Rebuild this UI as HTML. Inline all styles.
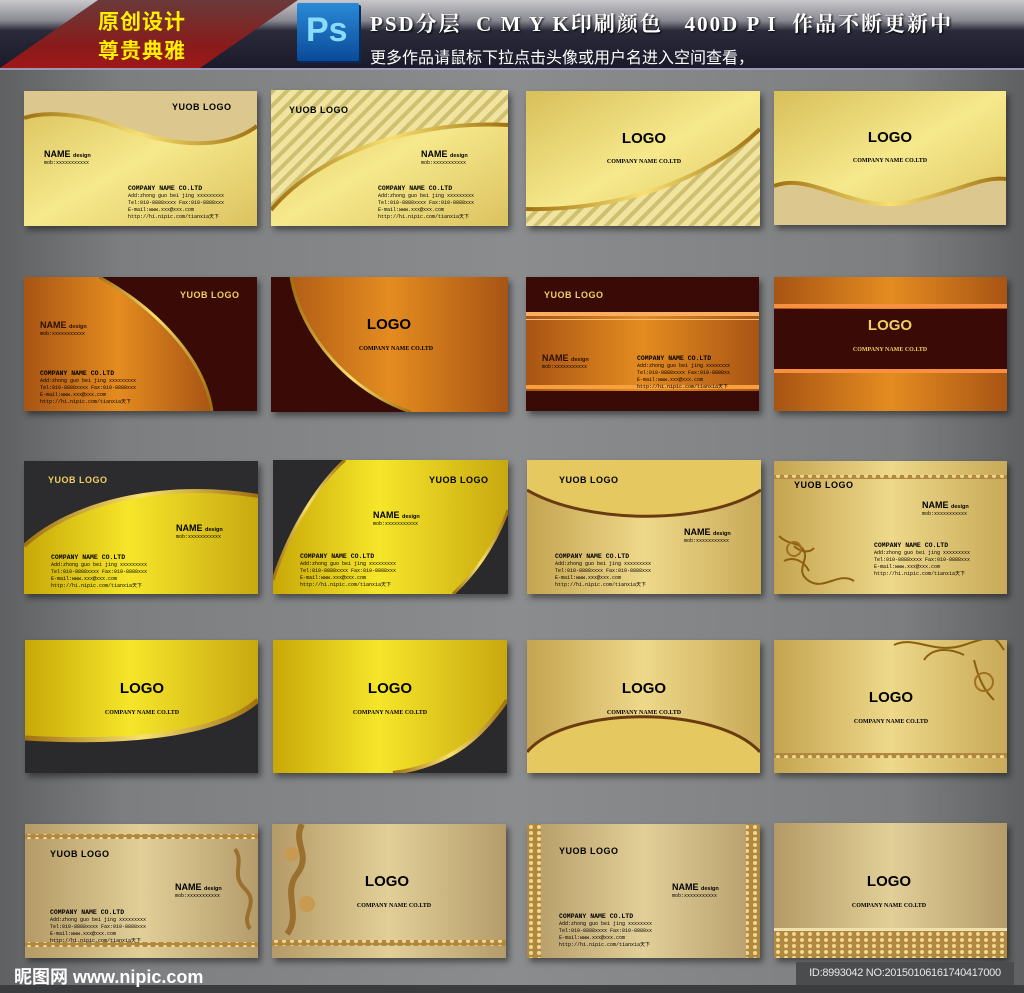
<!DOCTYPE html>
<html><head><meta charset="utf-8"><style>
*{margin:0;padding:0}
body{width:1024px;height:993px;overflow:hidden;position:relative;background:linear-gradient(90deg,#5e6062 0%,#7c7e80 12%,#8a8c8e 50%,#7c7e80 88%,#5e6062 100%);font-family:"Liberation Sans","Noto Sans CJK SC",sans-serif}
#hdr{position:absolute;left:0;top:0;width:1024px;height:68px;background:linear-gradient(180deg,#c8c8cc 0%,#8a8a92 30%,#2a2a3a 45%,#1a1a2a 100%);border-bottom:2px solid #9a9ab8}
#ban{position:absolute;left:0;top:0;width:298px;height:68px;background:linear-gradient(180deg,#6a3a3a,#8a1a1a 70%,#a01818);clip-path:polygon(98px 0,298px 0,200px 68px,0 68px)}
.bt{position:absolute;color:#fff000;font-size:21px;font-weight:bold;font-family:"Noto Sans CJK SC",sans-serif;letter-spacing:1px}
#ps{position:absolute;left:297px;top:3px;width:62px;height:58px;background:linear-gradient(180deg,#2a8ad8,#0a4a98);border-radius:2px;box-shadow:2px 2px 0 #062a5a}
#ps span{position:absolute;left:9px;top:8px;font:bold 34px "Liberation Sans",sans-serif;color:#8adcff}
.h1{position:absolute;left:370px;top:8px;color:#fff;font:bold 21px "Liberation Serif","Noto Serif CJK SC",serif;letter-spacing:2px;white-space:nowrap;text-shadow:1px 1px 2px #000}
.h2{position:absolute;left:370px;top:44px;color:#fff;font:16px "Noto Sans CJK SC",sans-serif;white-space:nowrap}
.card{position:absolute;box-shadow:3px 4px 6px rgba(0,0,0,.45)}
.card svg{display:block}
text{font-family:"Liberation Mono","Noto Sans CJK SC",monospace}
.yl{font:bold 9px "Liberation Sans",sans-serif;letter-spacing:.5px}
.lg{font:bold 15px "Liberation Sans",sans-serif;text-anchor:middle}
.cn{font:bold 6px "Liberation Serif",serif;text-anchor:middle}
.nm{font:bold 9px "Liberation Sans",sans-serif}
.ds{font:bold 5.5px "Liberation Sans",sans-serif}
.cb{font:bold 6.5px "Liberation Mono",monospace}
.cs{font:5px "Liberation Mono","Noto Sans CJK SC",monospace}
#foot{position:absolute;left:0;top:985px;width:1024px;height:8px;background:#3a3c3e}
#logo{position:absolute;left:14px;top:963px;color:#fff;font:bold 18px "Liberation Sans","Noto Sans CJK SC",sans-serif}
#id{position:absolute;left:796px;top:962px;width:218px;height:23px;background:#4a4c4e;color:#e8e8e8;font:11px "Liberation Sans",sans-serif;line-height:23px;text-align:center;white-space:nowrap;letter-spacing:-.3px}
</style></head><body>
<svg width="0" height="0" style="position:absolute"><defs>
<linearGradient id="gY" x1="0" y1="0" x2="1" y2="1"><stop offset="0" stop-color="#d8bf5a"/><stop offset=".5" stop-color="#f6e98c"/><stop offset="1" stop-color="#dcc260"/></linearGradient>
<linearGradient id="gB" x1="0" y1="0" x2="1" y2="0"><stop offset="0" stop-color="#c8a808"/><stop offset=".45" stop-color="#f6e62a"/><stop offset="1" stop-color="#c8a810"/></linearGradient>
<linearGradient id="gT" x1="0" y1="0" x2="1" y2="0"><stop offset="0" stop-color="#b49a66"/><stop offset=".5" stop-color="#e2cf98"/><stop offset="1" stop-color="#b49c6a"/></linearGradient>
<linearGradient id="gG" x1="0" y1="0" x2="1" y2="0"><stop offset="0" stop-color="#c4a450"/><stop offset=".5" stop-color="#eed88a"/><stop offset="1" stop-color="#c8aa58"/></linearGradient>
<linearGradient id="gO" x1="0" y1="0" x2="1" y2="0"><stop offset="0" stop-color="#a85414"/><stop offset=".5" stop-color="#e48c20"/><stop offset="1" stop-color="#a85414"/></linearGradient>
<linearGradient id="gS" x1="0" y1="0" x2="1" y2="0"><stop offset="0" stop-color="#a07010"/><stop offset=".5" stop-color="#f8e070"/><stop offset="1" stop-color="#a07010"/></linearGradient>
<pattern id="st" width="10" height="10" patternUnits="userSpaceOnUse" patternTransform="rotate(45)"><rect width="10" height="10" fill="#f0e4a0"/><rect width="4" height="10" fill="#cfc070"/></pattern>
<pattern id="ch" width="8" height="6" patternUnits="userSpaceOnUse"><rect width="8" height="6" fill="#b08840"/><circle cx="4" cy="3" r="2" fill="#f0d890"/></pattern>
</defs></svg>

<div id="hdr"></div>
<div id="ban"></div>
<div class="bt" style="left:98px;top:6px">原创设计</div>
<div class="bt" style="left:98px;top:35px">尊贵典雅</div>
<div id="ps"><span>Ps</span></div>
<div class="h1">PSD分层&nbsp;&nbsp;C M Y K印刷颜色&nbsp;&nbsp;&nbsp;400D P I&nbsp;&nbsp;作品不断更新中</div>
<div class="h2">更多作品请鼠标下拉点击头像或用户名进入空间查看，</div>

<!-- ROW 1 -->
<div class="card" style="left:24px;top:91px"><svg width="233" height="135">
<rect width="233" height="135" fill="url(#gY)"/>
<path d="M0 0H233V35C200 60 150 55 100 38 60 22 20 20 0 27Z" fill="#dcc88e"/>
<path d="M0 27C20 20 60 22 100 38 150 55 200 60 233 35" fill="none" stroke="url(#gS)" stroke-width="4"/>
<text x="148" y="19" class="yl">YUOB LOGO</text>
<text x="20" y="66" class="nm">NAME <tspan class="ds">design</tspan></text><text x="20" y="73" class="cs">mob:xxxxxxxxxxx</text>
<text x="104" y="99" class="cb">COMPANY NAME CO.LTD</text><text x="104" y="106" class="cs">Add:zhong guo bei jing xxxxxxxxx</text><text x="104" y="113" class="cs">Tel:010-8888xxxx Fax:010-8888xxx</text><text x="104" y="120" class="cs">E-mail:www.xxx@xxx.com</text><text x="104" y="127" class="cs">http://hi.nipic.com/tianxia天下</text>
</svg></div>
<div class="card" style="left:271px;top:90px"><svg width="237" height="136">
<rect width="237" height="136" fill="url(#gY)"/>
<path d="M0 0H237V35C150 30 50 60 0 120Z" fill="url(#st)"/>
<path d="M0 120C50 60 150 30 237 35" fill="none" stroke="url(#gS)" stroke-width="4"/>
<text x="18" y="23" class="yl">YUOB LOGO</text>
<text x="150" y="67" class="nm">NAME <tspan class="ds">design</tspan></text><text x="150" y="74" class="cs">mob:xxxxxxxxxxx</text>
<text x="107" y="100" class="cb">COMPANY NAME CO.LTD</text><text x="107" y="107" class="cs">Add:zhong guo bei jing xxxxxxxxx</text><text x="107" y="114" class="cs">Tel:010-8888xxxx Fax:010-8888xxx</text><text x="107" y="121" class="cs">E-mail:www.xxx@xxx.com</text><text x="107" y="128" class="cs">http://hi.nipic.com/tianxia天下</text>
</svg></div>
<div class="card" style="left:526px;top:91px"><svg width="234" height="135">
<rect width="234" height="135" fill="url(#gY)"/>
<path d="M0 135V118C90 120 180 90 234 38V135Z" fill="url(#st)"/>
<path d="M0 118C90 120 180 90 234 38" fill="none" stroke="url(#gS)" stroke-width="4"/>
<text x="118" y="52" class="lg">LOGO</text><text x="118" y="72" class="cn">COMPANY NAME CO.LTD</text>
</svg></div>
<div class="card" style="left:774px;top:91px"><svg width="232" height="134">
<rect width="232" height="134" fill="url(#gY)"/>
<path d="M0 95C40 80 80 125 140 110 190 98 210 85 232 88V134H0Z" fill="#dcc88e"/>
<path d="M0 95C40 80 80 125 140 110 190 98 210 85 232 88" fill="none" stroke="url(#gS)" stroke-width="4"/>
<text x="116" y="51" class="lg">LOGO</text><text x="116" y="71" class="cn">COMPANY NAME CO.LTD</text>
</svg></div>

<!-- ROW 2 -->
<div class="card" style="left:24px;top:277px"><svg width="233" height="134">
<rect width="233" height="134" fill="#3a0a06"/>
<path d="M0 0H75C130 30 180 80 188 134H0Z" fill="url(#gO)"/>
<path d="M75 0C130 30 180 80 188 134" fill="none" stroke="url(#gS)" stroke-width="3"/>
<text x="156" y="21" class="yl" fill="#f0d060">YUOB LOGO</text>
<text x="16" y="51" class="nm" fill="#2a1000">NAME <tspan class="ds">design</tspan></text><text x="16" y="58" class="cs">mob:xxxxxxxxxxx</text>
<text x="16" y="98" class="cb">COMPANY NAME CO.LTD</text><text x="16" y="105" class="cs">Add:zhong guo bei jing xxxxxxxxx</text><text x="16" y="112" class="cs">Tel:010-8888xxxx Fax:010-8888xxx</text><text x="16" y="119" class="cs">E-mail:www.xxx@xxx.com</text><text x="16" y="126" class="cs">http://hi.nipic.com/tianxia天下</text>
</svg></div>
<div class="card" style="left:271px;top:277px"><svg width="237" height="135">
<rect width="237" height="135" fill="url(#gO)"/>
<path d="M0 0H20C30 60 80 115 140 135H0Z" fill="#3a0a06"/>
<path d="M20 0C30 60 80 115 140 135" fill="none" stroke="url(#gS)" stroke-width="3"/>
<text x="118" y="52" class="lg">LOGO</text><text x="125" y="73" class="cn">COMPANY NAME CO.LTD</text>
</svg></div>
<div class="card" style="left:526px;top:277px"><svg width="233" height="134">
<rect width="233" height="134" fill="url(#gO)"/>
<rect width="233" height="35" fill="#3a0a06"/><rect y="35" width="233" height="4" fill="#f8b060"/><rect y="42" width="233" height="1" fill="#f8c080"/>
<rect y="108" width="233" height="4" fill="#f8a040"/><rect y="114" width="233" height="20" fill="#3a0a06"/>
<text x="18" y="21" class="yl" fill="#f0d060">YUOB LOGO</text>
<text x="16" y="84" class="nm" fill="#2a1000">NAME <tspan class="ds">design</tspan></text><text x="16" y="91" class="cs">mob:xxxxxxxxxxx</text>
<text x="111" y="83" class="cb">COMPANY NAME CO.LTD</text><text x="111" y="90" class="cs">Add:zhong guo bei jing xxxxxxxx</text><text x="111" y="97" class="cs">Tel:010-8888xxxx Fax:010-8888xx</text><text x="111" y="104" class="cs">E-mail:www.xxx@xxx.com</text><text x="111" y="111" class="cs">http://hi.nipic.com/tianxia天下</text>
</svg></div>
<div class="card" style="left:774px;top:277px"><svg width="233" height="134">
<rect width="233" height="134" fill="url(#gO)"/>
<rect y="27" width="233" height="4" fill="#f89040"/><rect y="32" width="233" height="60" fill="#3a0a06"/><rect y="92" width="233" height="4" fill="#f89040"/>
<text x="116" y="53" class="lg" fill="#f0d060">LOGO</text><text x="116" y="74" class="cn" fill="#f0d060">COMPANY NAME CO.LTD</text>
</svg></div>

<!-- ROW 3 -->
<div class="card" style="left:24px;top:461px"><svg width="234" height="133">
<rect width="234" height="133" fill="url(#gB)"/>
<path d="M0 0H234V35C140 20 50 40 0 85Z" fill="#2c2c2e"/>
<path d="M0 85C50 40 140 20 234 35" fill="none" stroke="url(#gS)" stroke-width="4"/>
<text x="24" y="22" class="yl" fill="#f0d060">YUOB LOGO</text>
<text x="152" y="70" class="nm">NAME <tspan class="ds">design</tspan></text><text x="152" y="77" class="cs">mob:xxxxxxxxxxx</text>
<text x="27" y="98" class="cb">COMPANY NAME CO.LTD</text><text x="27" y="105" class="cs">Add:zhong guo bei jing xxxxxxxxx</text><text x="27" y="112" class="cs">Tel:010-8888xxxx Fax:010-8888xxx</text><text x="27" y="119" class="cs">E-mail:www.xxx@xxx.com</text><text x="27" y="126" class="cs">http://hi.nipic.com/tianxia天下</text>
</svg></div>
<div class="card" style="left:273px;top:460px"><svg width="235" height="134">
<rect width="235" height="134" fill="#2a2a2c"/>
<path d="M0 120C20 60 50 20 72 0H235V50C220 90 200 115 180 134H0Z" fill="url(#gB)"/>
<path d="M0 120C20 60 50 20 72 0" fill="none" stroke="url(#gS)" stroke-width="3"/>
<path d="M235 50C220 90 200 115 180 134" fill="none" stroke="url(#gS)" stroke-width="3"/>
<text x="156" y="23" class="yl">YUOB LOGO</text>
<text x="100" y="58" class="nm">NAME <tspan class="ds">design</tspan></text><text x="100" y="65" class="cs">mob:xxxxxxxxxxx</text>
<text x="27" y="98" class="cb">COMPANY NAME CO.LTD</text><text x="27" y="105" class="cs">Add:zhong guo bei jing xxxxxxxxx</text><text x="27" y="112" class="cs">Tel:010-8888xxxx Fax:010-8888xxx</text><text x="27" y="119" class="cs">E-mail:www.xxx@xxx.com</text><text x="27" y="126" class="cs">http://hi.nipic.com/tianxia天下</text>
</svg></div>
<div class="card" style="left:527px;top:460px"><svg width="234" height="134">
<rect width="234" height="134" fill="url(#gG)"/>
<path d="M0 0H234V30C180 65 60 65 0 30Z" fill="#e6c860"/>
<path d="M0 30C60 65 180 65 234 30" fill="none" stroke="#6a3a10" stroke-width="3"/>
<text x="32" y="23" class="yl">YUOB LOGO</text>
<text x="157" y="75" class="nm">NAME <tspan class="ds">design</tspan></text><text x="157" y="82" class="cs">mob:xxxxxxxxxxx</text>
<text x="28" y="98" class="cb">COMPANY NAME CO.LTD</text><text x="28" y="105" class="cs">Add:zhong guo bei jing xxxxxxxxx</text><text x="28" y="112" class="cs">Tel:010-8888xxxx Fax:010-8888xxx</text><text x="28" y="119" class="cs">E-mail:www.xxx@xxx.com</text><text x="28" y="126" class="cs">http://hi.nipic.com/tianxia天下</text>
</svg></div>
<div class="card" style="left:774px;top:461px"><svg width="233" height="133">
<rect width="233" height="133" fill="url(#gG)"/>
<rect y="14" width="233" height="4" fill="url(#ch)"/>
<path d="M5 75c10 10 20 5 25 15s-10 20 5 30 30-10 45 0M10 100c10-5 20 0 25 10M20 85c5 5 15 8 20 2" fill="none" stroke="#8a6010" stroke-width="2"/>
<circle cx="20" cy="88" r="7" fill="none" stroke="#a07020" stroke-width="2"/>
<text x="20" y="27" class="yl">YUOB LOGO</text>
<text x="148" y="47" class="nm">NAME <tspan class="ds">design</tspan></text><text x="148" y="54" class="cs">mob:xxxxxxxxxxx</text>
<text x="100" y="86" class="cb">COMPANY NAME CO.LTD</text><text x="100" y="93" class="cs">Add:zhong guo bei jing xxxxxxxxx</text><text x="100" y="100" class="cs">Tel:010-8888xxxx Fax:010-8888xxx</text><text x="100" y="107" class="cs">E-mail:www.xxx@xxx.com</text><text x="100" y="114" class="cs">http://hi.nipic.com/tianxia天下</text>
</svg></div>

<!-- ROW 4 -->
<div class="card" style="left:25px;top:640px"><svg width="233" height="133">
<rect width="233" height="133" fill="#2a2a2c"/>
<path d="M0 0H233V60C200 90 120 105 0 98Z" fill="url(#gB)"/>
<path d="M0 98C120 105 200 90 233 60" fill="none" stroke="url(#gS)" stroke-width="5"/>
<text x="117" y="53" class="lg">LOGO</text><text x="117" y="74" class="cn">COMPANY NAME CO.LTD</text>
</svg></div>
<div class="card" style="left:273px;top:640px"><svg width="234" height="133">
<rect width="234" height="133" fill="url(#gB)"/>
<path d="M234 60C210 95 180 125 120 133H234Z" fill="#2a2a2c"/>
<path d="M234 60C210 95 180 125 120 133" fill="none" stroke="url(#gS)" stroke-width="4"/>
<text x="117" y="53" class="lg">LOGO</text><text x="117" y="74" class="cn">COMPANY NAME CO.LTD</text>
</svg></div>
<div class="card" style="left:527px;top:640px"><svg width="233" height="133">
<rect width="233" height="133" fill="url(#gG)"/>
<path d="M0 112C40 65 190 65 233 112V133H0Z" fill="#e6c860"/>
<path d="M0 112C40 65 190 65 233 112" fill="none" stroke="#6a3a10" stroke-width="3"/>
<text x="117" y="53" class="lg">LOGO</text><text x="117" y="74" class="cn">COMPANY NAME CO.LTD</text>
</svg></div>
<div class="card" style="left:774px;top:640px"><svg width="233" height="133">
<rect width="233" height="133" fill="url(#gG)"/>
<path d="M120 5c20-10 40 10 70 0s30-10 40 5M150 20c10-15 30-10 40-5M200 20c5 20 10 30 20 40" fill="none" stroke="#8a6010" stroke-width="2"/>
<circle cx="210" cy="42" r="9" fill="none" stroke="#a07020" stroke-width="2"/>
<rect y="113" width="233" height="5" fill="url(#ch)"/>
<text x="117" y="62" class="lg">LOGO</text><text x="117" y="83" class="cn">COMPANY NAME CO.LTD</text>
</svg></div>

<!-- ROW 5 -->
<div class="card" style="left:25px;top:824px"><svg width="233" height="134">
<rect width="233" height="134" fill="url(#gT)"/>
<rect y="10" width="233" height="5" fill="url(#ch)"/><rect y="118" width="233" height="5" fill="url(#ch)"/>
<path d="M210 25c10 15-5 25 10 40s-5 25 5 40" fill="none" stroke="#9a7030" stroke-width="4"/>
<text x="25" y="33" class="yl">YUOB LOGO</text>
<text x="150" y="66" class="nm">NAME <tspan class="ds">design</tspan></text><text x="150" y="73" class="cs">mob:xxxxxxxxxxx</text>
<text x="25" y="90" class="cb">COMPANY NAME CO.LTD</text><text x="25" y="97" class="cs">Add:zhong guo bei jing xxxxxxxxx</text><text x="25" y="104" class="cs">Tel:010-8888xxxx Fax:010-8888xxx</text><text x="25" y="111" class="cs">E-mail:www.xxx@xxx.com</text><text x="25" y="118" class="cs">http://hi.nipic.com/tianxia天下</text>
</svg></div>
<div class="card" style="left:272px;top:824px"><svg width="234" height="134">
<rect width="234" height="134" fill="url(#gT)"/>
<path d="M30 0c-10 20 10 30-5 50s5 40-10 60" fill="none" stroke="#9a7030" stroke-width="6"/>
<circle cx="20" cy="30" r="7" fill="#c89a50"/><circle cx="35" cy="80" r="8" fill="#c89a50"/>
<rect y="116" width="234" height="6" fill="url(#ch)"/>
<text x="115" y="62" class="lg">LOGO</text><text x="122" y="83" class="cn">COMPANY NAME CO.LTD</text>
</svg></div>
<div class="card" style="left:527px;top:824px"><svg width="233" height="134">
<rect width="233" height="134" fill="url(#gT)"/>
<rect width="14" height="134" fill="url(#ch)"/><rect x="219" width="14" height="134" fill="url(#ch)"/>
<text x="32" y="30" class="yl">YUOB LOGO</text>
<text x="145" y="66" class="nm">NAME <tspan class="ds">design</tspan></text><text x="145" y="73" class="cs">mob:xxxxxxxxxxx</text>
<text x="32" y="94" class="cb">COMPANY NAME CO.LTD</text><text x="32" y="101" class="cs">Add:zhong guo bei jing xxxxxxxx</text><text x="32" y="108" class="cs">Tel:010-8888xxxx Fax:010-8888xx</text><text x="32" y="115" class="cs">E-mail:www.xxx@xxx.com</text><text x="32" y="122" class="cs">http://hi.nipic.com/tianxia天下</text>
</svg></div>
<div class="card" style="left:774px;top:823px"><svg width="233" height="135">
<rect width="233" height="135" fill="url(#gT)"/>
<rect y="105" width="233" height="3" fill="#f0e0b0"/>
<rect y="108" width="233" height="27" fill="url(#ch)"/>
<text x="115" y="63" class="lg">LOGO</text><text x="115" y="84" class="cn">COMPANY NAME CO.LTD</text>
</svg></div>

<div id="foot"></div>
<div id="logo">昵图网 www.nipic.com</div>
<div id="id">ID:8993042 NO:20150106161740417000</div>
</body></html>
